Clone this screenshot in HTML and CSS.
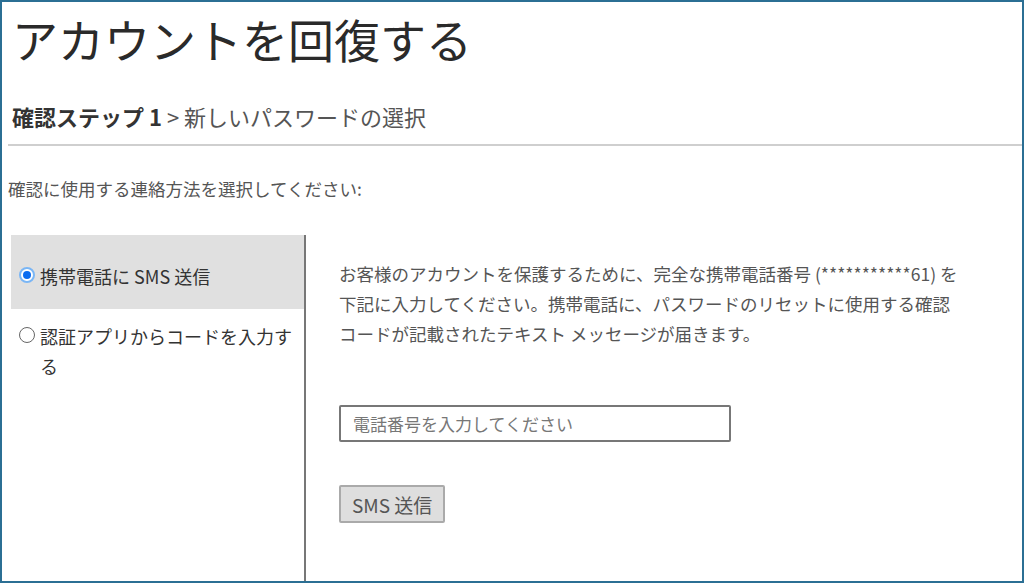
FILE: index.html
```html
<!DOCTYPE html>
<html>
<head>
	<meta charset="utf-8">
	<title>アカウントを回復する</title>
	<link rel="stylesheet" href="styles.css">
</head>
<body>
	<div class="frame">
		<header>
			<h1>アカウントを回復する</h1>
			<h2><b>確認ステップ 1</b> &gt; 新しいパスワードの選択</h2>
		</header>

		<p class="prompt">確認に使用する連絡方法を選択してください:</p>

		<div class="verify">
			<ul class="methods">
				<li class="method selected">
					<span class="radio on"></span>
					<span>携帯電話に SMS 送信</span>
				</li>
				<li class="method">
					<span class="radio"></span>
					<span>認証アプリからコードを入力する</span>
				</li>
			</ul>

			<div class="panel">
				<p class="info">お客様のアカウントを保護するために、完全な携帯電話番号 (***********61) を下記に入力してください。携帯電話に、パスワードのリセットに使用する確認コードが記載されたテキスト メッセージが届きます。</p>
				<input class="phone" type="text" placeholder="電話番号を入力してください">
				<button class="send">SMS 送信</button>
			</div>
		</div>
	</div>
</body>
</html>
```

FILE: styles.css
```css
* {
	margin: 0;
	padding: 0;
	box-sizing: border-box;
	font-family: "Noto Sans CJK JP", "Noto Sans", sans-serif;
}

body {
	background-color: #ffffff;
}

.frame {
	width: 1024px;
	height: 583px;
	border: 2px solid #2b6f94;
	padding-left: 6px;
	overflow: hidden;
	display: flex;
	flex-direction: column;
}

header {
	border-bottom: 2px solid #cfcfcf;
	padding-left: 4px;
}

header h1 {
	font-size: 46px;
	font-weight: normal;
	color: #2a2a2a;
	line-height: 60px;
	margin-top: 6px;
}

header h2 {
	font-size: 22px;
	font-weight: normal;
	color: #555;
	line-height: 30px;
	margin-top: 33px;
	margin-bottom: 13px;
}

header h2 b {
	color: #333;
}

.prompt {
	font-size: 17.5px;
	color: #555;
	margin-top: 30px;
	line-height: 26px;
}

.verify {
	display: flex;
	flex: 1;
	margin-top: 33px;
	margin-left: 3px;
}

.methods {
	list-style: none;
	width: 295px;
	border-right: 2px solid #777;
}

.method {
	display: flex;
	align-items: flex-start;
	gap: 5px;
	padding: 0 10px 0 8px;
	font-size: 18px;
	color: #333;
	line-height: 30px;
}

.method.selected {
	background: #e0e0e0;
	padding-top: 26px;
	padding-bottom: 18px;
}

.method + .method {
	padding-top: 12px;
}

.radio {
	flex: none;
	width: 16px;
	height: 16px;
	margin-top: 6px;
	border: 1px solid #666;
	border-radius: 50%;
	background: #fff;
	position: relative;
}

.radio.on {
	border: 2px solid #7ab6f5;
}

.radio.on::after {
	content: "";
	position: absolute;
	left: 2px;
	top: 2px;
	width: 8px;
	height: 8px;
	border-radius: 50%;
	background: #0a6cf0;
}

.panel {
	padding: 24px 0 0 33px;
	display: flex;
	flex-direction: column;
	align-items: flex-start;
}

.info {
	width: 620px;
	font-size: 17.5px;
	color: #555;
	line-height: 30px;
}

.phone {
	margin-top: 56px;
	width: 392px;
	height: 37px;
	border: 2px solid #777;
	border-radius: 2px;
	padding: 0 12px;
	font-size: 17px;
	color: #333;
	outline: none;
}

.phone::placeholder {
	color: #777;
}

.send {
	margin-top: 43px;
	padding: 0 11px;
	height: 38px;
	background: #dedede;
	border: 2px solid #aaa;
	border-radius: 2px;
	font-size: 19px;
	color: #555;
}
```
